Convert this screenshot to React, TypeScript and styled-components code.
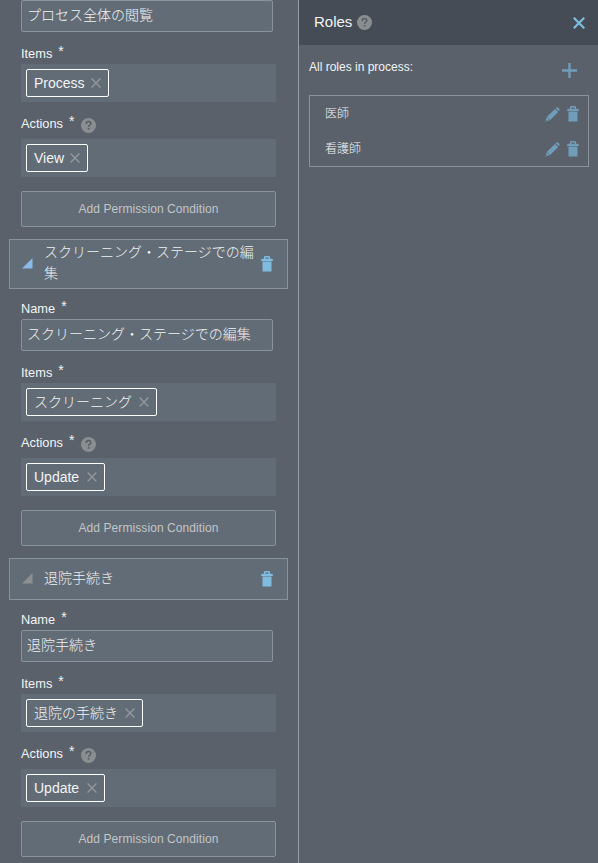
import React from "react";
import styled, { createGlobalStyle } from "styled-components";

const colors = {
  panel: "#5a616a",
  field: "#626c76",
  header: "#454c55",
  border: "#89939c",
  blue: "#7fbde0",
  mutedBlue: "#6f9dba",
  gray: "#8b8e91",
  text: "#f3f4f5",
  softText: "#f1f2f3",
};

const Global = createGlobalStyle`
  * { box-sizing: border-box; }
  body {
    margin: 0;
    background: ${colors.panel};
    color: ${colors.text};
    font-family: "Liberation Sans", "Noto Sans CJK JP", sans-serif;
    font-weight: 300;
    overflow: hidden;
  }
`;

const Page = styled.div`
  display: flex;
  width: 598px;
  height: 863px;
  overflow: hidden;
  background: ${colors.panel};
`;

const PermissionsPanel = styled.section`
  width: 299px;
  flex: none;
  border-right: 1px solid #9b9c9e;
`;

const RolesPanel = styled.section`
  flex: 1;
`;

const Fields = styled.div`
  display: flex;
  flex-direction: column;
  width: 255px;
  margin: 0 0 12px 21px;
`;

const Label = styled.div<{ $height: number; $drop: number }>`
  display: flex;
  align-items: flex-start;
  height: ${(p) => p.$height}px;
  padding-top: ${(p) => p.$drop}px;
  font-size: 12.8px;
  line-height: 15px;
  white-space: nowrap;
`;

const Star = styled.span`
  margin: -2px 0 0 6px;
  font-size: 14px;
`;

const HelpSlot = styled.span`
  display: flex;
  margin: 2px 0 0 7px;
`;

const TextField = styled.div`
  width: 252px;
  height: 32px;
  padding: 0 5px;
  border: 1px solid ${colors.border};
  border-radius: 2px;
  background: ${colors.field};
  color: ${colors.softText};
  font-size: 14px;
  line-height: 28px;
  white-space: nowrap;
`;

const TagBox = styled.div`
  height: 38px;
  padding: 5px;
  background: ${colors.field};
`;

const Tag = styled.div<{ $width: number }>`
  display: inline-flex;
  align-items: center;
  justify-content: space-between;
  width: ${(p) => p.$width}px;
  height: 28px;
  padding: 0 7px;
  border: 1px solid #fff;
  border-radius: 2px;
  font-size: 14px;
  line-height: 26px;
  white-space: nowrap;
  vertical-align: top;
`;

const AddButton = styled.button`
  height: 36px;
  margin-top: 14px;
  padding: 0;
  border: 1px solid ${colors.border};
  border-radius: 2px;
  background: ${colors.field};
  color: #c3c5c7;
  font: 12px "Liberation Sans", sans-serif;
  letter-spacing: 0.08px;
`;

const GroupHeader = styled.div<{ $height: number }>`
  display: flex;
  align-items: center;
  width: 279px;
  height: ${(p) => p.$height}px;
  margin-left: 9px;
  padding: 0 14px 0 12px;
  border: 1px solid ${colors.border};
  background: ${colors.field};
`;

const GroupTitle = styled.div`
  width: 212px;
  margin: 0 5px 2px 11px;
  color: ${colors.softText};
  font-size: 14px;
  line-height: 21px;
`;

const TitleBar = styled.header`
  display: flex;
  align-items: center;
  height: 45px;
  padding: 0 13.5px 0 15px;
  background: ${colors.header};
`;

const Title = styled.h1`
  margin: 0 5px 1px 0;
  font-size: 15px;
  font-weight: 400;
  line-height: 18px;
`;

const Spacer = styled.div`
  flex: 1;
`;

const RolesIntro = styled.div`
  display: flex;
  justify-content: space-between;
  height: 50px;
  padding: 15px 21px 0 10px;
  font-size: 12px;
  line-height: 14px;
  svg { margin-top: 3px; }
`;

const RoleList = styled.div`
  width: 280px;
  height: 72px;
  margin-left: 10px;
  border: 1px solid ${colors.border};
`;

const RoleRow = styled.div`
  display: flex;
  align-items: center;
  height: 35px;
  padding: 0 9px 2px 15px;
  color: ${colors.softText};
  font-size: 12px;
`;

const RoleName = styled.span`
  flex: 1;
`;

const RoleActions = styled.span`
  display: flex;
  align-items: center;
  gap: 7px;
  padding-top: 3px;
`;

function Help() {
  return (
    <svg width="15" height="15" viewBox="0 0 15 15">
      <circle cx="7.5" cy="7.5" r="7.5" fill={colors.gray} />
      <path d="M5.2 5.9C5.2 4.3 6.2 3.6 7.5 3.6s2.3.8 2.3 2c0 1.7-2.2 1.6-2.2 3.3" fill="none" stroke="#555d66" strokeWidth="1.5" />
      <rect x="6.8" y="10" width="1.7" height="1.6" fill="#555d66" />
    </svg>
  );
}

function Trash({ color }: { color: string }) {
  return (
    <svg width="12" height="16" viewBox="0 0 12 16">
      <path d="M3.7 3V1.1Q3.7.7 4.1.7h3.8Q8.3.7 8.3 1.1V3" fill="none" stroke={color} strokeWidth="1.4" />
      <path d="M1 2.8h10Q12 3.2 12 5.1H0Q0 3.2 1 2.8zM1.5 5.6h9V15.2q0 .4-.4.4H1.9q-.4 0-.4-.4z" fill={color} />
    </svg>
  );
}

function Pencil() {
  return (
    <svg width="15" height="15" viewBox="0 0 15 15" fill={colors.mutedBlue}>
      <path d="M10 1.9 13.2 5.1 5.2 12.9 2 9.7zM10.7 1.2 11.6.4Q12.3 0 13 .6L14.3 1.9Q15 2.6 14.4 3.3L13.8 4.2zM1.6 10.1 4.8 13.3 2.3 14 1 12.6zM.7 13.3 1.7 14.3 0 15z" />
    </svg>
  );
}

function Cross({ size, color, weight }: { size: number; color: string; weight: number }) {
  return (
    <svg width={size} height={size} viewBox="0 0 12 12">
      <path d="M.7.7 11.3 11.3M11.3.7.7 11.3" stroke={color} strokeWidth={weight} />
    </svg>
  );
}

function Plus() {
  return (
    <svg width="15" height="15" viewBox="0 0 15 15">
      <path d="M7.5 0v15M0 7.5h15" stroke={colors.mutedBlue} strokeWidth="2.3" />
    </svg>
  );
}

function Corner({ color }: { color: string }) {
  return (
    <svg width="11" height="12" viewBox="0 0 11 12">
      <path d="M10.5 0v10.5H0z" fill={color} />
    </svg>
  );
}

const tagWidths: Record<string, number> = {
  Process: 83,
  View: 62,
  Update: 79,
  スクリーニング: 131,
  退院の手続き: 117,
};

function TagField({ value }: { value: string }) {
  return (
    <TagBox>
      <Tag $width={tagWidths[value]}>
        {value}
        <Cross size={10} color="#92979b" weight={1.7} />
      </Tag>
    </TagBox>
  );
}

type Permission = { name: string; item: string; action: string };

function PermissionFields({ name, item, action, labelled = true }: Permission & { labelled?: boolean }) {
  return (
    <Fields>
      {labelled && (
        <Label $height={30} $drop={12}>
          Name<Star>*</Star>
        </Label>
      )}
      <TextField>{name}</TextField>
      <Label $height={32} $drop={14}>
        Items<Star>*</Star>
      </Label>
      <TagField value={item} />
      <Label $height={37} $drop={14}>
        Actions<Star>*</Star>
        <HelpSlot><Help /></HelpSlot>
      </Label>
      <TagField value={action} />
      <AddButton>Add Permission Condition</AddButton>
    </Fields>
  );
}

export default function App() {
  return (
    <>
      <Global />
      <Page>
        <PermissionsPanel>
          <PermissionFields name="プロセス全体の閲覧" item="Process" action="View" labelled={false} />
          <GroupHeader $height={50}>
            <Corner color="#88b9e8" />
            <GroupTitle>スクリーニング・ステージでの編集</GroupTitle>
            <Trash color={colors.blue} />
          </GroupHeader>
          <PermissionFields name="スクリーニング・ステージでの編集" item="スクリーニング" action="Update" />
          <GroupHeader $height={42}>
            <Corner color="#8b8f92" />
            <GroupTitle>退院手続き</GroupTitle>
            <Trash color={colors.blue} />
          </GroupHeader>
          <PermissionFields name="退院手続き" item="退院の手続き" action="Update" />
        </PermissionsPanel>
        <RolesPanel>
          <TitleBar>
            <Title>Roles</Title>
            <Help />
            <Spacer />
            <Cross size={12} color={colors.blue} weight={2.2} />
          </TitleBar>
          <RolesIntro>
            <span>All roles in process:</span>
            <Plus />
          </RolesIntro>
          <RoleList>
            {["医師", "看護師"].map((role) => (
              <RoleRow key={role}>
                <RoleName>{role}</RoleName>
                <RoleActions>
                  <Pencil />
                  <Trash color={colors.mutedBlue} />
                </RoleActions>
              </RoleRow>
            ))}
          </RoleList>
        </RolesPanel>
      </Page>
    </>
  );
}
